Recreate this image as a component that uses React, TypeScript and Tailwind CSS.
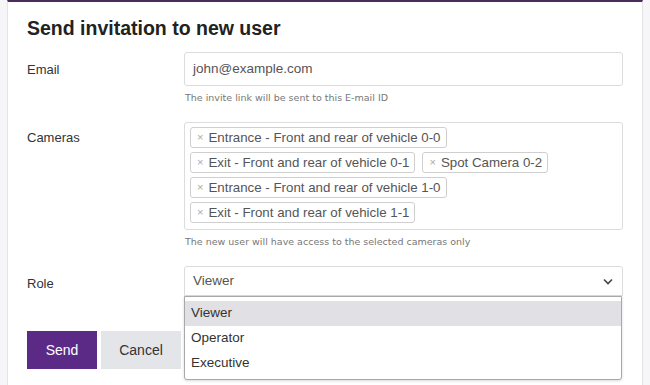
const CAMERAS = [
  "Entrance - Front and rear of vehicle 0-0",
  "Exit - Front and rear of vehicle 0-1",
  "Spot Camera 0-2",
  "Entrance - Front and rear of vehicle 1-0",
  "Exit - Front and rear of vehicle 1-1",
];

const ROLES = ["Viewer", "Operator", "Executive"];

function Tag({ label }: { label: string }) {
  return (
    <span className="flex h-[21px] items-center rounded-[3px] border border-[#cfcfcf] pl-[6px] pr-[5px] text-[13.3px] text-[#555]">
      <span className="mr-[5px] text-[11px] text-[#aaa]">×</span>
      {label}
    </span>
  );
}

export default function App() {
  return (
    <div className="h-[385px] overflow-hidden bg-[#f6f6f8] px-[7px] font-['Liberation_Sans',Arial,sans-serif]">
      <div className="h-full border-x border-t-2 border-x-[#e4e4e6] border-t-[#4a2b5c] bg-white px-[19px] pt-[15px]">
        <h1 className="text-[19.5px] font-bold leading-[22px] text-[#222]">Send invitation to new user</h1>

        {/* Email */}
        <div className="mt-[13px] flex">
          <label className="w-[157px] shrink-0 pt-[8px] text-[13px] text-[#333]">Email</label>
          <div className="flex-1">
            <div className="flex h-[34px] items-center rounded-[3px] border border-[#dcdcdc] px-[8px] text-[13.5px] text-[#555]">
              john@example.com
            </div>
            <p className="mt-[6px] pl-[1px] font-['DejaVu_Sans',sans-serif] text-[9.5px] leading-[12px] text-[#777]">
              The invite link will be sent to this E-mail ID
            </p>
          </div>
        </div>

        {/* Cameras */}
        <div className="mt-[18px] flex">
          <label className="w-[157px] shrink-0 pt-[6px] text-[13px] text-[#333]">Cameras</label>
          <div className="flex-1">
            <div className="flex h-[108px] flex-wrap content-start gap-x-[7px] gap-y-[4px] rounded-[3px] border border-[#dcdcdc] px-[5px] pt-[4px]">
              {CAMERAS.map((c) => (
                <Tag key={c} label={c} />
              ))}
            </div>
            <p className="mt-[6px] pl-[1px] font-['DejaVu_Sans',sans-serif] text-[9.5px] leading-[12px] text-[#777]">
              The new user will have access to the selected cameras only
            </p>
          </div>
        </div>

        {/* Role */}
        <div className="mt-[18px] flex">
          <label className="w-[157px] shrink-0 pt-[8px] text-[13px] text-[#333]">Role</label>
          <div className="relative flex-1">
            <div className="flex h-[30px] items-center justify-between rounded-t-[3px] border border-[#dcdcdc] pl-[8px] pr-[9px] text-[13.5px] text-[#555]">
              Viewer
              <svg width="10" height="7" viewBox="0 0 10 7" fill="none" stroke="#444" strokeWidth="1.6">
                <path d="M1 1.5l4 4 4-4" />
              </svg>
            </div>
            <ul className="absolute left-0 right-[1px] top-[30px] z-10 rounded-b-[3px] border border-[#a8a8a8] bg-white pb-[3px] pt-[4px] shadow-[0_1px_3px_rgba(0,0,0,0.15)]">
              {ROLES.map((r, i) => (
                <li
                  key={r}
                  className={`flex h-[25px] items-center px-[6px] text-[13.5px] text-[#333] ${i === 0 ? "bg-[#e1e0e5]" : ""}`}
                >
                  {r}
                </li>
              ))}
            </ul>
          </div>
        </div>

        {/* Actions */}
        <div className="mt-[35px] flex gap-[4px]">
          <button className="h-[38px] w-[70px] bg-[#5b2a86] text-[14px] text-white">Send</button>
          <button className="h-[38px] w-[80px] bg-[#e4e5e9] text-[14px] text-[#333]">Cancel</button>
        </div>
      </div>
    </div>
  );
}
